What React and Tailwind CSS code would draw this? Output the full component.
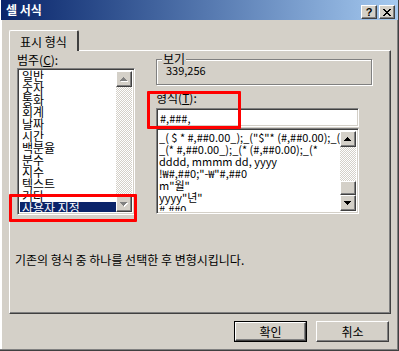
import React from 'react';

const raised =
  'border border-t-white border-l-white border-r-[#404040] border-b-[#404040] shadow-[inset_-1px_-1px_#808080]';
const sunken =
  'border border-t-[#808080] border-l-[#808080] border-r-white border-b-white shadow-[inset_1px_1px_#404040,inset_-1px_-1px_#d4d0c8]';
const checker =
  'bg-[repeating-conic-gradient(#ffffff_0_25%,#d4d0c8_0_50%)] bg-[length:2px_2px]';

function Arrow({ up, disabled }) {
  const rows = [0, 1, 2, 3];
  const tri = (color, dx, dy) =>
    rows.map((i) => (
      <rect
        key={color + i}
        x={(up ? 3 - i : i) + dx}
        y={i + dy}
        width={up ? 2 * i + 1 : 7 - 2 * i}
        height="1"
        fill={color}
      />
    ));
  return (
    <svg width="8" height="5" viewBox="0 0 8 5" shapeRendering="crispEdges">
      {disabled && tri('#ffffff', 1, 1)}
      {tri(disabled ? '#808080' : '#000000', 0, 0)}
    </svg>
  );
}

function ScrollBtn({ up, disabled }) {
  return (
    <div className={`w-[16px] h-[16px] shrink-0 bg-[#d4d0c8] flex items-center justify-center ${raised}`}>
      <Arrow up={up} disabled={disabled} />
    </div>
  );
}

const categories = ['일반', '숫자', '통화', '회계', '날짜', '시간', '백분율', '분수', '지수', '텍스트', '기타'];

const formats = [
  '_(  $ * #,##0.00_);_("$"* (#,##0.00);_("$"*',
  '_(* #,##0.00_);_(* (#,##0.00);_(*',
  'dddd, mmmm dd, yyyy',
  '!₩#,##0;"-₩"#,##0',
  'm"월"',
  'yyyy"년"',
  '#,##0_',
];

export default function App() {
  return (
    <div className="relative w-[399px] h-[351px] bg-[#d4d0c8] flex flex-col text-[12px] leading-[12px] text-black font-['Noto_Sans_CJK_KR','Noto_Sans',sans-serif] shadow-[inset_-1px_-1px_#404040,inset_-2px_-2px_#808080,inset_2px_0_#ffffff] overflow-hidden">
      {/* title bar */}
      <div className="mx-[1px] h-[20px] shrink-0 flex items-center bg-linear-to-r from-[#0a246a] to-[#a6caf0] pl-[5px] pr-[3px]">
        <span className="text-white font-bold text-[12px] leading-[12px]">셀 서식</span>
        <div className="ml-auto flex items-center gap-[2px] mt-[4px]">
          <div className={`w-[16px] h-[14px] bg-[#d4d0c8] flex items-center justify-center ${raised}`}>
            <span className="font-bold text-[11px] leading-[11px] font-['Liberation_Sans',sans-serif]">?</span>
          </div>
          <div className={`w-[16px] h-[14px] bg-[#d4d0c8] flex items-center justify-center ${raised}`}>
            <svg width="8" height="7" viewBox="0 0 8 7" shapeRendering="crispEdges">
              <path d="M0 0h2v1h-2zM6 0h2v1h-2zM1 1h2v1h-2zM5 1h2v1h-2zM2 2h4v1h-4zM3 3h2v1h-2zM2 4h4v1h-4zM1 5h2v1h-2zM5 5h2v1h-2zM0 6h2v1h-2zM6 6h2v1h-2z" fill="#000" />
            </svg>
          </div>
        </div>
      </div>

      {/* tab strip */}
      <div className="mt-[10px] ml-[9px] flex">
        <div className="relative z-10 w-[70px] h-[21px] -mb-[1px] bg-[#d4d0c8] border-t border-l border-t-white border-l-white border-r-2 border-r-[#404040] rounded-t-[2px] flex items-center justify-center">
          <span className="mt-[2px]">표시 형식</span>
        </div>
      </div>

      {/* panel */}
      <div className={`ml-[9px] mr-[8px] h-[264px] ${raised} flex flex-col`}>
        <div className="flex pt-[3px]">
          {/* left column */}
          <div className="ml-[7px] w-[118px] flex flex-col">
            <div className="h-[14px]">
              범주(<span className="underline">C</span>):
            </div>
            <div className={`h-[147px] bg-white flex p-[2px] ${sunken}`}>
              <div className="flex-1 flex flex-col overflow-hidden -mt-[1px]">
                {categories.map((c) => (
                  <div key={c} className="h-[12px] shrink-0 pl-[2px] whitespace-nowrap">{c}</div>
                ))}
                <div className="h-[12px] shrink-0 pl-[2px] bg-[#0a246a] text-white whitespace-nowrap">사용자 지정</div>
              </div>
              <div className="w-[16px] flex flex-col">
                <ScrollBtn up disabled />
                <div className={`flex-1 ${checker}`} />
                <ScrollBtn disabled />
              </div>
            </div>
          </div>

          {/* right column */}
          <div className="ml-[21px] flex flex-col">
            <div className="relative mt-[5px] w-[216px] h-[26px] border border-[#808080] shadow-[inset_1px_1px_#ffffff,1px_1px_#ffffff] pl-[9px] pt-[5px] text-[11px] leading-[11px]">
              <span className="absolute -top-[7px] left-[5px] px-[1px] bg-[#d4d0c8] text-[12px] leading-[12px]">보기</span>
              339,256
            </div>
            <div className="mt-[7px] h-[14px]">
              형식(<span className="underline">T</span>):
            </div>
            <div className={`mt-[2px] w-[203px] h-[19px] bg-white pl-[3px] flex items-center text-[11px] ${sunken}`}>#,###,</div>
            <div className={`mt-[1px] w-[203px] h-[86px] bg-white flex p-[2px] ${sunken}`}>
              <div className="flex-1 flex flex-col overflow-hidden text-[11px]">
                {formats.map((f) => (
                  <div key={f} className="h-[12px] shrink-0 whitespace-nowrap leading-[12px]">{f}</div>
                ))}
              </div>
              <div className="w-[16px] flex flex-col">
                <ScrollBtn up />
                <div className={`flex-1 ${checker}`} />
                <div className={`w-[16px] h-[14px] bg-[#d4d0c8] ${raised}`} />
                <ScrollBtn />
              </div>
            </div>
          </div>
        </div>

        <div className="mt-[39px] ml-[5px]">기존의 형식 중 하나를 선택한 후 변형시킵니다.</div>
      </div>

      {/* buttons */}
      <div className="mt-[7px] mr-[10px] flex justify-end gap-[9px]">
        <div className="w-[73px] h-[21px] border border-black flex">
          <div className={`flex-1 bg-[#d4d0c8] flex items-center justify-center ${raised}`}>확인</div>
        </div>
        <div className={`w-[73px] h-[21px] bg-[#d4d0c8] flex items-center justify-center ${raised}`}>취소</div>
      </div>

      {/* red annotation boxes */}
      <div className="absolute left-[147px] top-[91px] w-[94px] h-[38px] border-[3px] border-[#ff0000] rounded-[1px]" />
      <div className="absolute left-[9px] top-[194px] w-[128px] h-[28px] border-[3px] border-[#ff0000] rounded-[1px]" />
    </div>
  );
}
